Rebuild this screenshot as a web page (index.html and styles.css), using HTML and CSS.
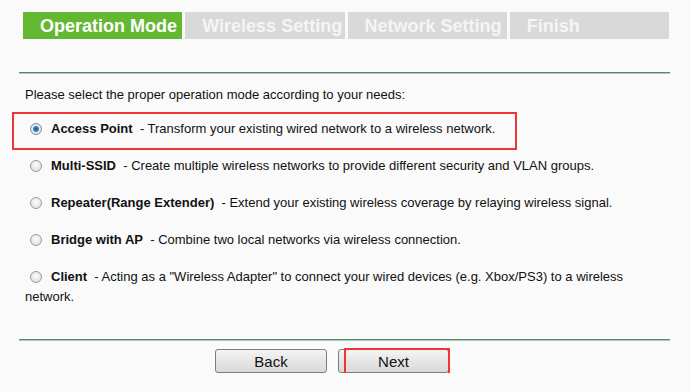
FILE: index.html
```html
<!DOCTYPE html>
<html lang="en">
<head>
    <meta charset="UTF-8">
    <title>Quick Setup - Operation Mode</title>
    <link rel="stylesheet" href="styles.css">
</head>
<body>
<div class="wizard">
    <div class="steps">
        <div class="step active">Operation Mode</div>
        <div class="step">Wireless Setting</div>
        <div class="step">Network Setting</div>
        <div class="step">Finish</div>
    </div>

    <div class="rule"></div>

    <div class="modes">
        <p class="intro">Please select the proper operation mode according to your needs:</p>

        <p class="mode">
            <span class="radio checked"></span><b>Access Point</b>&nbsp; - Transform your existing wired network to a wireless network.
            <span class="mark mark-ap"></span>
        </p>
        <p class="mode">
            <span class="radio"></span><b>Multi-SSID</b>&nbsp; - Create multiple wireless networks to provide different security and VLAN groups.
        </p>
        <p class="mode">
            <span class="radio"></span><b>Repeater(Range Extender)</b>&nbsp; - Extend your existing wireless coverage by relaying wireless signal.
        </p>
        <p class="mode">
            <span class="radio"></span><b>Bridge with AP</b>&nbsp; - Combine two local networks via wireless connection.
        </p>
        <p class="mode">
            <span class="radio"></span><b>Client</b>&nbsp; - Acting as a "Wireless Adapter" to connect your wired devices (e.g. Xbox/PS3) to a wireless network.
        </p>
    </div>

    <div class="rule"></div>

    <div class="buttons">
        <button class="btn">Back</button>
        <button class="btn next">Next<span class="mark mark-next"></span></button>
    </div>
</div>
</body>
</html>
```

FILE: styles.css
```css
body {
    margin: 0;
    background: #fafafa;
    font-family: "Liberation Sans", Arial, sans-serif;
    color: #111;
}

.wizard {
    width: 651px;
    margin-left: 19px;
    padding-top: 12px;
}

.steps {
    display: grid;
    grid-template-columns: repeat(4, 1fr);
    gap: 3px;
    margin-left: 4px;
    width: 646px;
}

.step {
    height: 27px;
    line-height: 28px;
    padding-left: 17px;
    background: #d9d9d9;
    color: #f5f5f5;
    font-size: 18px;
    font-weight: bold;
    white-space: nowrap;
    overflow: hidden;
}

.step.active {
    background: #64b731;
    color: #fff;
}

.rule {
    height: 1px;
    border-top: 1px solid #4d8d6b;
    background: #a9cbb8;
}

.steps + .rule {
    margin-top: 33px;
}

.modes {
    padding-left: 6px;
    font-size: 13px;
}

.modes p {
    margin: 0;
    line-height: 20px;
}

.intro {
    margin-top: 11px !important;
}

.mode {
    position: relative;
    margin-top: 17px !important;
}

.intro + .mode {
    margin-top: 14px !important;
}

.mode:last-child {
    margin-bottom: 32px !important;
}

.radio {
    display: inline-block;
    box-sizing: border-box;
    width: 12px;
    height: 12px;
    margin: 0 9px 0 5px;
    vertical-align: -2px;
    border-radius: 50%;
    border: 1px solid #9a9a9a;
    background: radial-gradient(circle at 50% 40%, #fdfdfd, #d8d8d8);
}

.radio.checked {
    border-color: #7f8c99;
    background: radial-gradient(circle, #1c5d8c 0, #3a86bd 2.5px, #e8eef3 3.5px, #cfd8e0 6px);
}

.mark {
    position: absolute;
    border: 2px solid #ee3434;
    box-sizing: border-box;
    pointer-events: none;
}

.mark-ap {
    left: -13px;
    top: -7px;
    width: 505px;
    height: 38px;
}

.buttons {
    display: flex;
    gap: 11px;
    padding: 8px 0 0 196px;
}

.btn {
    position: relative;
    width: 112px;
    height: 24px;
    padding: 0;
    border: 1px solid #7d7d7d;
    border-radius: 3px;
    background: linear-gradient(#f4f4f4, #e6e6e6 50%, #d9d9d9);
    font-family: "Liberation Sans", Arial, sans-serif;
    font-size: 15px;
    color: #111;
}

.btn.next {
    width: 111px;
}

.mark-next {
    left: 5px;
    top: -2px;
    width: 106px;
    height: 28px;
}
```
